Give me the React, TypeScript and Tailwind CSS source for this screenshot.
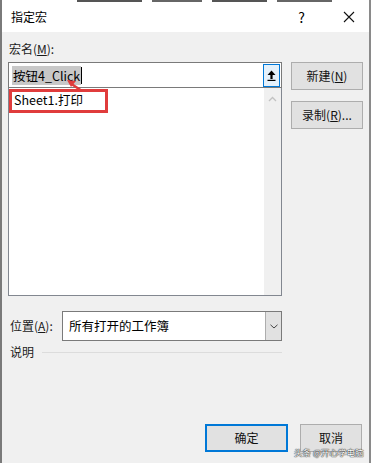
import React from 'react';

const font = { fontFamily: '"Noto Sans CJK SC", "Noto Sans", sans-serif' };

function Btn({ children, primary = false }: { children: React.ReactNode; primary?: boolean }) {
  return (
    <div
      className={
        'flex flex-1 items-center justify-center bg-[#e1e1e1] text-[12px] text-[#111] ' +
        (primary ? 'border-2 border-[#0078d7]' : 'border border-[#adadad]')
      }
    >
      {children}
    </div>
  );
}

export default function App() {
  return (
    <div className="relative w-[371px] h-[463px] bg-[#f0f0f0] text-[12px] text-[#1a1a1a] overflow-hidden border-l-2 border-r-2 border-l-[#7a7a7a] border-r-[#8a8a8a]" style={font}>
      {/* bits of the window behind */}
      <div className="absolute left-0 top-0 flex h-[2px] w-full gap-[10px] pl-[75px]">
        <div className="w-[65px] bg-[#555]" />
        <div className="w-[50px] bg-[#666]" />
        <div className="w-[55px] bg-[#555]" />
        <div className="w-[55px] bg-[#666]" />
      </div>

      {/* title bar */}
      <div className="flex h-[32px] items-center bg-white pl-[9px] pt-[2px]">
        <span className="text-[12px] text-black">指定宏</span>
        <span className="ml-auto mr-[38px] text-[14px] text-black">?</span>
        <svg width="12" height="12" viewBox="0 0 12 12" className="mr-[14px]">
          <path d="M1 1L11 11M11 1L1 11" stroke="#111" strokeWidth="1.1" />
        </svg>
      </div>

      <div className="flex px-[6px] pt-[8px]">
        {/* left column */}
        <div className="flex w-[274px] flex-col">
          <div className="h-[22px] pl-[1px] leading-[18px]">
            宏名(<span className="underline">M</span>):
          </div>

          {/* input */}
          <div className="relative flex h-[26px] items-center border border-[#7a7a7a] bg-white pl-[3px]">
            <span className="bg-[#c8c8c8] px-[1px] text-[12.5px] leading-[19px] text-black">按钮4_Click</span>
            <span className="h-[17px] w-px bg-black" />
            <div className="ml-auto mr-[1px] flex h-[23px] w-[17px] items-center justify-center border border-[#0078d7] bg-[#e5f1fb]">
              <svg width="9" height="11" viewBox="0 0 9 11">
                <path d="M4.5 0.5L8.5 5H5.6V9H3.4V5H0.5Z" fill="#000" />
                <rect x="0.5" y="9.8" width="8" height="1.2" fill="#000" />
              </svg>
            </div>
          </div>

          {/* list */}
          <div className="relative flex h-[208px] border border-t-0 border-[#828790] bg-white">
            <div className="flex-1 pl-[5px] pt-[3px] text-[12.5px] leading-[18px] text-black">Sheet1.打印</div>
            <div className="flex w-[17px] justify-center bg-[#f0f0f0] pt-[8px]">
              <svg width="9" height="6" viewBox="0 0 9 6">
                <path d="M1 5L4.5 1.5L8 5" stroke="#c2c2c2" strokeWidth="1.3" fill="none" />
              </svg>
            </div>
          </div>

          {/* location */}
          <div className="mt-[15px] flex items-center">
            <div className="w-[54px] pl-[2px]">
              位置(<span className="underline">A</span>):
            </div>
            <div className="flex h-[30px] flex-1 items-center border border-[#7a7a7a] bg-white pl-[6px]">
              <span className="text-[12.5px] text-black">所有打开的工作簿</span>
              <div className="ml-auto flex h-full w-[16px] items-center justify-center border-l border-[#adadad] bg-[#e1e1e1]">
                <svg width="8" height="5" viewBox="0 0 8 5">
                  <path d="M0.5 0.8L4 4L7.5 0.8" stroke="#444" strokeWidth="1" fill="none" />
                </svg>
              </div>
            </div>
          </div>

          <div className="mt-[1px] flex items-center">
            <span className="pl-[2px] leading-[20px]">说明</span>
            <div className="ml-[8px] h-px flex-1 bg-[#dcdcdc]" />
          </div>
        </div>

        {/* right column */}
        <div className="ml-[9px] flex w-[72px] flex-col gap-[11px] pt-[22px]">
          <div className="flex h-[28px]">
            <Btn>
              新建(<span className="underline">N</span>)
            </Btn>
          </div>
          <div className="flex h-[28px]">
            <Btn>
              录制(<span className="underline">R</span>)...
            </Btn>
          </div>
        </div>
      </div>

      {/* bottom buttons */}
      <div className="absolute left-[203px] top-[424px] flex gap-[12px]">
        <div className="flex h-[28px] w-[83px]">
          <Btn primary>确定</Btn>
        </div>
        <div className="flex h-[28px] w-[62px]">
          <Btn>取消</Btn>
        </div>
      </div>

      {/* annotation */}
      <div className="absolute left-[7px] top-[89px] h-[24px] w-[99px] border-[3px] border-[#e03c3c]" />
      <svg className="absolute left-[60px] top-[76px]" width="30" height="18" viewBox="0 0 30 18">
        <path d="M20 15L8 7" stroke="#e03c3c" strokeWidth="2.5" />
        <path d="M5 4L14 5L9 11Z" fill="#e03c3c" />
      </svg>

      {/* watermark */}
      <div
        className="absolute left-[292px] top-[446px] whitespace-nowrap text-[8.5px] leading-[12px] text-white"
        style={{ textShadow: '0 0 1px #333, 0 0 1px #333, 0 0 1px #333' }}
      >
        头条 @开心学电脑
      </div>
    </div>
  );
}
